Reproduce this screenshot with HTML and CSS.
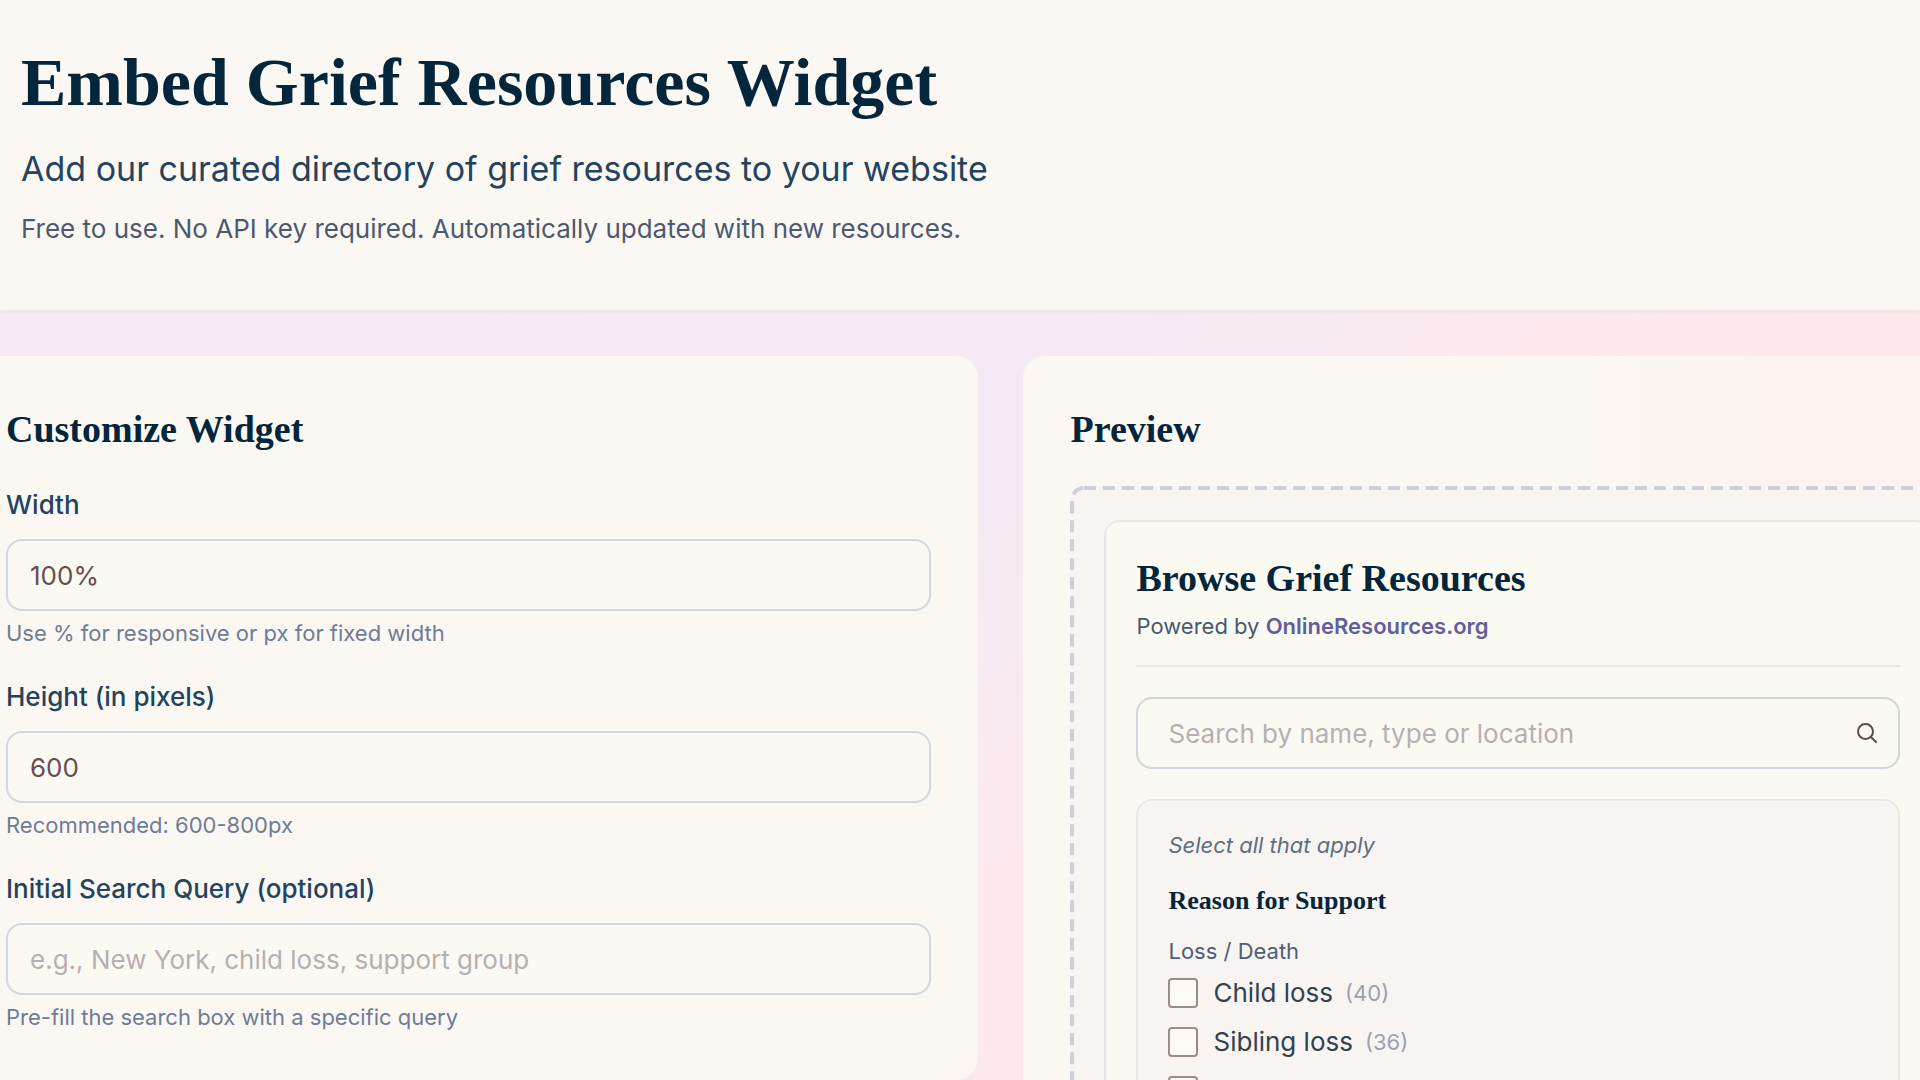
FILE: index.html
```html
<!DOCTYPE html>
<html lang="en">
<head>
<meta charset="utf-8">
<title>Embed Grief Resources Widget</title>
<link rel="stylesheet" href="styles.css">
</head>
<body>
<header class="page-header">
  <h1>Embed Grief Resources Widget</h1>
  <p class="lead">Add our curated directory of grief resources to your website</p>
  <p class="note">Free to use. No API key required. Automatically updated with new resources.</p>
</header>
<main class="columns">
  <section class="card">
    <h2>Customize Widget</h2>
    <form class="fields">
      <div class="field">
        <label for="width">Width</label>
        <input class="text-input" id="width" type="text" value="100%">
        <small>Use % for responsive or px for fixed width</small>
      </div>
      <div class="field">
        <label for="height">Height (in pixels)</label>
        <input class="text-input" id="height" type="text" value="600">
        <small>Recommended: 600-800px</small>
      </div>
      <div class="field">
        <label for="query">Initial Search Query (optional)</label>
        <input class="text-input" id="query" type="text" placeholder="e.g., New York, child loss, support group">
        <small>Pre-fill the search box with a specific query</small>
      </div>
    </form>
  </section>
  <section class="card card-tinted">
    <h2>Preview</h2>
    <div class="preview">
      <svg class="preview-outline" aria-hidden="true"><rect width="100%" height="100%" rx="12"/></svg>
      <div class="widget">
        <div class="widget-head">
          <h3>Browse Grief Resources</h3>
          <p>Powered by <a href="#">OnlineResources.org</a></p>
        </div>
        <form class="search">
          <input type="search" aria-label="Search resources" placeholder="Search by name, type or location">
          <button type="button" aria-label="Search">
            <svg viewBox="0 0 20 20" fill="none" stroke="currentColor" stroke-width="2" stroke-linecap="round"><circle cx="8.5" cy="8.5" r="7.5"/><path d="M14 14 19 19"/></svg>
          </button>
        </form>
        <div class="filters">
          <p class="hint">Select all that apply</p>
          <h4>Reason for Support</h4>
          <p class="group">Loss / Death</p>
          <ul class="options">
            <li><label><input type="checkbox"><span>Child loss</span><span class="count">(40)</span></label></li>
            <li><label><input type="checkbox"><span>Sibling loss</span><span class="count">(36)</span></label></li>
            <li><label><input type="checkbox" aria-label="More"></label></li>
          </ul>
        </div>
      </div>
    </div>
  </section>
</main>
</body>
</html>
```
FILE: styles.css
```css
* { box-sizing: border-box; }

body {
  margin: 0;
  height: 100vh;
  overflow: hidden;
  font-family: Inter, "Liberation Sans", sans-serif;
  color: #24435e;
  background: linear-gradient(135deg, #f5ebf4 0%, #f5eaf3 50%, #fde9ed 66%, #fde8ec 100%);
}

h1, h2, h3, h4, p, ul { margin: 0; }

h1, h2, h3, h4 {
  font-family: "Liberation Serif", serif;
  font-weight: 700;
  color: #04263c;
}

.page-header {
  padding: 42px 21px 62px;
  background: #fbf8f3;
  border-bottom: 1px solid #f3e9ea;
  box-shadow: 0 1px 3px rgba(80, 40, 80, 0.06);
}

h1 { font-size: 68px; line-height: 80px; }

.lead { margin-top: 23px; font-size: 34px; line-height: 48px; }

.note { margin-top: 17px; font-size: 26px; line-height: 38px; color: #4b5a72; }

.columns {
  display: grid;
  grid-template-columns: 34fr 33fr;
  align-items: start;
  gap: 45px;
  margin: 45px -93px 0 -41px;
}

.card {
  padding: 47px;
  border-radius: 22px;
  background: #fbf8f3;
}

.card-tinted {
  background: linear-gradient(to right, #fbf8f3 55%, #fcf3f1 75%);
}

h2 { font-size: 38px; line-height: 52px; }

.fields { display: grid; gap: 30px; margin-top: 32px; }

.field { display: grid; }

.field label { font-size: 26px; font-weight: 500; line-height: 36px; }

.field small { margin-top: 6px; font-size: 22px; line-height: 32px; color: #6f7c93; }

.text-input {
  width: 100%;
  height: 72px;
  margin-top: 16px;
  padding: 0 22px;
  border: 2px solid #d2d8df;
  border-radius: 16px;
  background: #fbfaf2;
  font: 400 26px Inter, sans-serif;
  color: #674d4d;
}

input::placeholder { color: #b7afb2; opacity: 1; }

.preview {
  position: relative;
  margin-top: 31px;
  padding: 34px;
  border-radius: 14px;
  background: #f7f4f2;
}

/* Long dashes; a dashed border would draw them too short */
.preview-outline {
  position: absolute;
  inset: 2px;
  width: calc(100% - 4px);
  height: calc(100% - 4px);
  overflow: visible;
  fill: none;
  stroke: #cbd0d9;
  stroke-width: 4px;
  stroke-dasharray: 12 7;
  pointer-events: none;
}

.widget {
  padding: 31px 30px;
  border: 2px solid #e7e6e9;
  border-radius: 16px;
  background: #fbfaf2;
}

.widget-head { padding-bottom: 22px; border-bottom: 2px solid #e9e7e6; }

h3 { font-size: 38px; line-height: 50px; }

.widget-head p { margin-top: 6px; font-size: 22px; line-height: 34px; color: #48596c; }

.widget-head a { color: #625e9c; font-weight: 600; text-decoration: none; }

.search {
  display: flex;
  align-items: center;
  height: 72px;
  margin-top: 30px;
  padding: 0 21px 0 30px;
  border: 2px solid #d2d5da;
  border-radius: 16px;
}

.search input {
  flex: 1;
  min-width: 0;
  padding: 0;
  border: 0;
  background: none;
  font: 400 26px Inter, sans-serif;
  color: #674d4d;
}

.search button {
  display: flex;
  padding: 0;
  border: 0;
  background: none;
  color: #5d4c4e;
}

.search svg { width: 20px; height: 20px; }

.filters {
  margin-top: 30px;
  padding: 27px 30px;
  border: 2px solid #e7e6e9;
  border-radius: 16px;
  background: #f7f4f2;
}

.hint { font-size: 22px; line-height: 34px; font-style: italic; color: #5f6e82; }

h4 { margin-top: 21px; font-size: 26px; line-height: 36px; }

.group { margin-top: 16px; font-size: 22px; line-height: 32px; color: #4d5f77; }

.options {
  display: grid;
  gap: 19px;
  margin-top: 11px;
  padding: 0;
  list-style: none;
}

.options label {
  display: flex;
  align-items: center;
  font-size: 26px;
  line-height: 30px;
  color: #33424f;
}

.options input {
  appearance: none;
  width: 30px;
  height: 30px;
  margin: 0 15px 0 0;
  border: 2px solid #9c8b8b;
  border-radius: 4px;
  background: #fdfaf7;
}

.count { margin-left: 12px; font-size: 22px; color: #9da1af; }
```
